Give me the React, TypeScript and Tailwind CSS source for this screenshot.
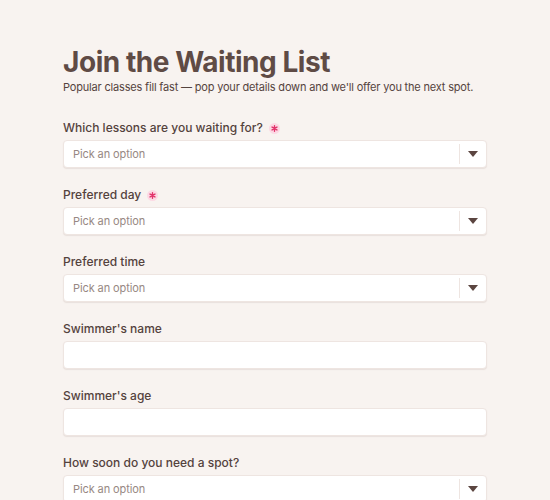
import { ReactNode } from "react"

const fields: { label: string; kind: "select" | "text"; required?: boolean }[] = [
  { label: "Which lessons are you waiting for?", kind: "select", required: true },
  { label: "Preferred day", kind: "select", required: true },
  { label: "Preferred time", kind: "select" },
  { label: "Swimmer's name", kind: "text" },
  { label: "Swimmer's age", kind: "text" },
  { label: "How soon do you need a spot?", kind: "select" },
]

function RequiredMark() {
  return (
    <span className="ml-[6px] inline-flex h-[11px] w-[11px] items-center justify-center rounded-full bg-[#fcd9e4]">
      <svg width="7" height="7" viewBox="0 0 10 10" fill="none" stroke="#e2336b" strokeWidth="2" strokeLinecap="round">
        <path d="M5 1v8M1.5 3l7 4M8.5 3l-7 4" />
      </svg>
    </span>
  )
}

function Box({ children }: { children?: ReactNode }) {
  return (
    <div className="flex h-[28px] items-stretch rounded-[4px] border border-[#eee5e1] bg-white shadow-[0_1px_1px_rgba(120,90,80,0.12)]">
      {children}
    </div>
  )
}

function Select() {
  return (
    <Box>
      <div className="flex flex-1 items-center pl-[9px] text-[11px] tracking-[-0.1px] text-[#978883]">Pick an option</div>
      <div className="my-[3px] w-px bg-[#eee5e1]" />
      <div className="flex w-[26px] items-center justify-center">
        <svg width="10" height="6" viewBox="0 0 10 6">
          <path d="M0 0h10L5 6z" fill="#5b4540" />
        </svg>
      </div>
    </Box>
  )
}

export default function App() {
  return (
    <div className="min-h-[500px] bg-[#f8f3f0] px-[63px] pt-[46px] font-['Inter',sans-serif] text-[#614e48]">
      <div className="w-[424px]">
        <h1 className="text-[28px] leading-[32px] font-bold tracking-[-0.45px] text-[#5f4b45]">Join the Waiting List</h1>
        <p className="whitespace-nowrap text-[11px] leading-[18px] tracking-[-0.18px] text-[#55433e]">
          Popular classes fill fast — pop your details down and we'll offer you the next spot.
        </p>

        <div className="mt-[22px] flex flex-col gap-[17px]">
          {fields.map((f) => (
            <div key={f.label}>
              <label className="mb-[2px] flex h-[20px] items-center text-[12px] font-medium text-[#54423d]">
                {f.label}
                {f.required && <RequiredMark />}
              </label>
              {f.kind === "select" ? <Select /> : <Box />}
            </div>
          ))}
        </div>
      </div>
    </div>
  )
}
